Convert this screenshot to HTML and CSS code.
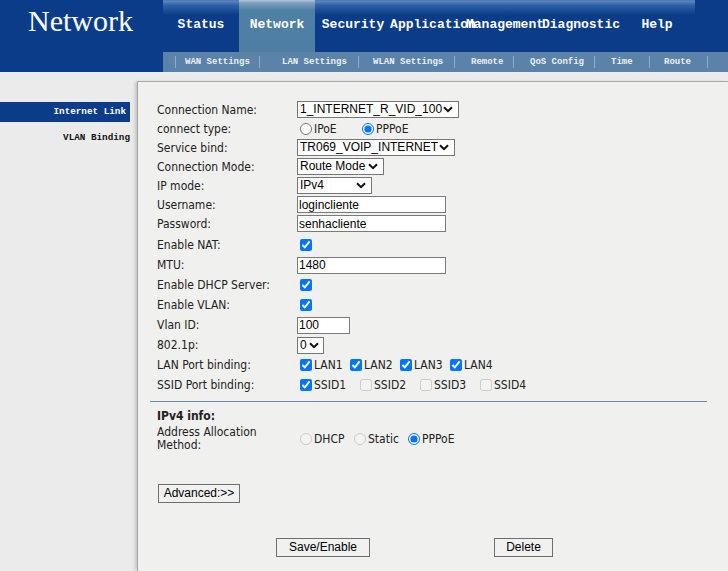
FILE: index.html
```html
<!DOCTYPE html>
<html>
<head>
<meta charset="utf-8">
<title>Network</title>
<link rel="stylesheet" href="styles.css">
</head>
<body>
<header class="header">
  <div class="logo">Network</div>
  <div class="nav">
    <div class="topnav">
      <div class="tabs">
        <a class="tab">Status</a>
        <a class="tab active">Network</a>
        <a class="tab">Security</a>
        <a class="tab tab-app">Application</a>
        <a class="tab">Management</a>
        <a class="tab">Diagnostic</a>
        <a class="tab">Help</a>
      </div>
    </div>
    <div class="subnav">
      <a class="sub">WAN Settings</a>
      <a class="sub">LAN Settings</a>
      <a class="sub">WLAN Settings</a>
      <a class="sub">Remote</a>
      <a class="sub">QoS Config</a>
      <a class="sub">Time</a>
      <a class="sub">Route</a>
    </div>
  </div>
</header>
<div class="main">
  <nav class="sidebar">
    <a class="side-item active">Internet Link</a>
    <a class="side-item">VLAN Binding</a>
  </nav>
  <section class="panel">
    <div class="row">
      <div class="label">Connection Name:</div>
      <div class="field"><select class="select w-conn"><option>1_INTERNET_R_VID_100</option></select></div>
    </div>
    <div class="row">
      <div class="label">connect type:</div>
      <div class="field choices choices-type">
        <label class="opt"><input type="radio" name="ct" class="radio">IPoE</label>
        <label class="opt"><input type="radio" name="ct" class="radio" checked>PPPoE</label>
      </div>
    </div>
    <div class="row">
      <div class="label">Service bind:</div>
      <div class="field"><select class="select w-svc"><option>TR069_VOIP_INTERNET</option></select></div>
    </div>
    <div class="row">
      <div class="label">Connection Mode:</div>
      <div class="field"><select class="select w-mode"><option>Route Mode</option></select></div>
    </div>
    <div class="row">
      <div class="label">IP mode:</div>
      <div class="field"><select class="select w-ip"><option>IPv4</option><option>IPv4/IPv6</option></select></div>
    </div>
    <div class="row">
      <div class="label">Username:</div>
      <div class="field"><input type="text" class="text-input w-wide" value="logincliente"></div>
    </div>
    <div class="row">
      <div class="label">Password:</div>
      <div class="field"><input type="text" class="text-input w-wide" value="senhacliente"></div>
    </div>
    <div class="row tall first-tall">
      <div class="label">Enable NAT:</div>
      <div class="field"><input type="checkbox" class="cb" checked></div>
    </div>
    <div class="row tall">
      <div class="label">MTU:</div>
      <div class="field"><input type="text" class="text-input w-wide" value="1480"></div>
    </div>
    <div class="row tall">
      <div class="label">Enable DHCP Server:</div>
      <div class="field"><input type="checkbox" class="cb" checked></div>
    </div>
    <div class="row tall">
      <div class="label">Enable VLAN:</div>
      <div class="field"><input type="checkbox" class="cb" checked></div>
    </div>
    <div class="row tall">
      <div class="label">Vlan ID:</div>
      <div class="field"><input type="text" class="text-input w-vlan" value="100"></div>
    </div>
    <div class="row tall">
      <div class="label">802.1p:</div>
      <div class="field"><select class="select w-prio"><option>0</option></select></div>
    </div>
    <div class="row tall">
      <div class="label">LAN Port binding:</div>
      <div class="field choices choices-lan">
        <label class="opt"><input type="checkbox" class="cb" checked>LAN1</label>
        <label class="opt"><input type="checkbox" class="cb" checked>LAN2</label>
        <label class="opt"><input type="checkbox" class="cb" checked>LAN3</label>
        <label class="opt"><input type="checkbox" class="cb" checked>LAN4</label>
      </div>
    </div>
    <div class="row tall">
      <div class="label">SSID Port binding:</div>
      <div class="field choices choices-ssid">
        <label class="opt"><input type="checkbox" class="cb" checked>SSID1</label>
        <label class="opt"><input type="checkbox" class="cb" disabled>SSID2</label>
        <label class="opt"><input type="checkbox" class="cb" disabled>SSID3</label>
        <label class="opt"><input type="checkbox" class="cb" disabled>SSID4</label>
      </div>
    </div>

    <div class="divider"></div>

    <div class="section-title">IPv4 info:</div>
    <div class="row addr-row">
      <div class="label label-2line">Address Allocation<br>Method:</div>
      <div class="field choices choices-addr">
        <label class="opt"><input type="radio" name="aa" class="radio" disabled>DHCP</label>
        <label class="opt"><input type="radio" name="aa" class="radio" disabled>Static</label>
        <label class="opt"><input type="radio" name="aa" class="radio" checked>PPPoE</label>
      </div>
    </div>

    <div class="advanced"><button class="btn btn-adv">Advanced:&gt;&gt;</button></div>

    <div class="actions">
      <button class="btn btn-save">Save/Enable</button>
      <button class="btn btn-del">Delete</button>
    </div>
  </section>
</div>
</body>
</html>
```
FILE: styles.css
```css
html, body {
  margin: 0;
  padding: 0;
}
body {
  width: 728px;
  height: 571px;
  overflow: hidden;
  background: #ebebeb;
  font-family: "DejaVu Sans", "Liberation Sans", sans-serif;
  font-stretch: condensed;
  font-size: 12px;
  color: #222;
}

/* ---------- header ---------- */
.header {
  display: flex;
  height: 72px;
  background: #0b3c8a;
}
.logo {
  width: 163px;
  flex: none;
  box-sizing: border-box;
  padding: 6px 0 0 28px;
  font: 30px/30px "Liberation Serif", serif;
  color: #fff;
}
.nav {
  flex: 1;
  display: flex;
  flex-direction: column;
}
.topnav {
  height: 52px;
  display: flex;
}
.tabs {
  display: flex;
  background: linear-gradient(to bottom, #4f6f98 0, #5c88c2 1px, #2f63a8 5px, #0b3c8a 15px);
}
.tab {
  width: 76px;
  height: 52px;
  box-sizing: border-box;
  padding-top: 17px;
  display: flex;
  justify-content: center;
  white-space: nowrap;
  font: bold 13px/16px "Liberation Mono", monospace;
  color: #fff;
}
.tab-app { padding-left: 8px; }
.tab.active {
  background: linear-gradient(to bottom, #b4c6d6 0, #7d9fbe 3px, #5080a6 10px, #4f7ea5 100%);
}
.subnav {
  height: 20px;
  display: flex;
  padding-left: 12px;
  background: #5b83aa;
}
.sub {
  box-sizing: border-box;
  height: 20px;
  white-space: nowrap;
  font: bold 9px/20px "Liberation Mono", monospace;
  color: #eef0f2;
  background: linear-gradient(#93aac2, #93aac2) left center / 1px 12px no-repeat;
}
.sub:nth-child(1) { width: 84px; padding-left: 10px; }
.sub:nth-child(2) { width: 99px; padding-left: 23px; }
.sub:nth-child(3) { width: 96px; padding-left: 15px; }
.sub:nth-child(4) { width: 59px; padding-left: 17px; }
.sub:nth-child(5) { width: 81px; padding-left: 17px; }
.sub:nth-child(6) { width: 55px; padding-left: 17px; }
.sub:nth-child(7) {
  width: 59px;
  padding-left: 15px;
  background:
    linear-gradient(#93aac2, #93aac2) left center / 1px 12px no-repeat,
    linear-gradient(#93aac2, #93aac2) right center / 1px 12px no-repeat;
}

/* ---------- body ---------- */
.main {
  display: flex;
}
.sidebar {
  width: 137px;
  flex: none;
  box-sizing: border-box;
  padding-top: 30px;
}
.side-item {
  display: block;
  width: 130px;
  height: 20px;
  margin-bottom: 6px;
  box-sizing: border-box;
  text-align: right;
  font: bold 9.3px/20px "Liberation Mono", monospace;
  color: #111;
}
.side-item.active {
  background: #0b3c8a;
  color: #fff;
  padding-right: 4px;
}

.panel {
  flex: 1;
  margin-top: 9px;
  height: 490px;
  box-sizing: border-box;
  padding: 18px 0 0 19px;
  background: #f0f0ee;
  border-top: 1px solid #a9a9a9;
  border-left: 1px solid #a4a4a4;
  box-shadow: -3px 0 3px -1px #c4c4c4;
}

.row {
  display: flex;
  align-items: center;
  height: 19px;
}
.row.tall { height: 20px; }
.row.first-tall { margin-top: 2px; }
.label {
  width: 140px;
  flex: none;
  white-space: nowrap;
}
.field {
  display: flex;
  align-items: center;
}

.select {
  -webkit-appearance: none;
  appearance: none;
  box-sizing: border-box;
  height: 17px;
  padding: 0 16px 0 2px;
  border: 1px solid #767676;
  border-radius: 0;
  background: #fff url("data:image/svg+xml,%3Csvg xmlns='http://www.w3.org/2000/svg' width='10' height='7' viewBox='0 0 10 7'%3E%3Cpath d='M1 1.2 L5 5.2 L9 1.2' fill='none' stroke='%23111' stroke-width='2'/%3E%3C/svg%3E") no-repeat right 5px center;
  font: 12px/15px "Liberation Sans", sans-serif;
  color: #000;
}
.w-conn { width: 162px; }
.w-svc { width: 158px; }
.w-mode { width: 87px; }
.w-ip { width: 75px; }
.w-prio { width: 27px; padding-right: 12px; background-position: right 4px center; }

.text-input {
  box-sizing: border-box;
  height: 17px;
  padding: 0 1px;
  border: 1px solid #7a7a7a;
  border-radius: 0;
  background: #fff;
  font: 12px "Liberation Sans", sans-serif;
  color: #000;
}
.w-wide { width: 149px; }
.w-vlan { width: 53px; }

.cb, .radio {
  width: 12px;
  height: 12px;
  margin: 0 2px 0 3px;
  flex: none;
}

.choices {
  display: flex;
}
.opt {
  display: flex;
  align-items: center;
  white-space: nowrap;
}
.choices-type .opt { width: 62px; }
.choices-lan .opt { width: 50px; }
.choices-ssid .opt { width: 60px; }
.choices-addr .opt { width: 54px; }

.divider {
  margin: 6px 21px 0 -7px;
  border-top: 1px solid #6a8cab;
}
.section-title {
  margin-top: 7px;
  font-weight: bold;
  line-height: 14px;
}
.addr-row {
  height: 26px;
  margin-top: 3px;
}
.label-2line {
  line-height: 13px;
}

.btn {
  box-sizing: border-box;
  height: 19px;
  padding: 0;
  border: 1px solid #6f6f6f;
  border-radius: 0;
  background: #f1f1f1;
  font: 12px/17px "Liberation Sans", sans-serif;
  color: #000;
  text-align: center;
}
.advanced {
  margin-top: 32px;
  padding-left: 1px;
}
.btn-adv { width: 82px; }
.btn-save { width: 94px; }
.btn-del { width: 59px; }
.actions {
  display: flex;
  gap: 124px;
  margin-top: 35px;
  padding-left: 119px;
}
```
